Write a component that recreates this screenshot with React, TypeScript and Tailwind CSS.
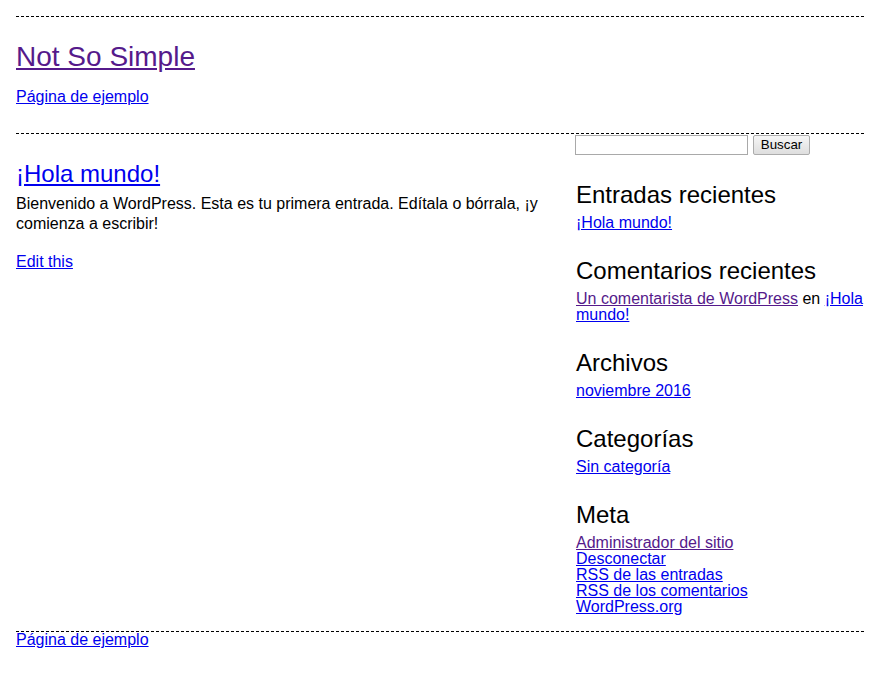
import React from "react";

const linkBlue = "text-[#0000ee] underline";
const linkVisited = "text-[#551a8b] underline";

function Widget({ title, children }: { title: string; children: React.ReactNode }) {
  return (
    <section className="mt-[26px] pl-[1px]">
      <h2 className="text-[24px] leading-[28px] font-normal text-black">{title}</h2>
      <div className="mt-[6px] leading-[16px]">{children}</div>
    </section>
  );
}

export default function App() {
  return (
    <div className="min-h-[676px] bg-white pt-4 pl-4 font-['Liberation_Sans',Arial,sans-serif] text-[16px] text-black">
      <div className="w-[848px]">
        <header className="border-y border-dashed border-black pt-[24px] pb-[27px]">
          <h1 className="text-[28px] leading-[31px] font-normal">
            <a href="#" className={linkVisited}>Not So Simple</a>
          </h1>
          <nav className="mt-[16px] leading-[18px]">
            <a href="#" className={linkBlue}>Página de ejemplo</a>
          </nav>
        </header>

        <div className="flex">
          <main className="flex-1 pt-[26px] pr-[24px]">
            <article>
              <h2 className="text-[24px] leading-[28px] font-normal">
                <a href="#" className={linkBlue}>¡Hola mundo!</a>
              </h2>
              <p className="mt-[6px] leading-[20px]">
                Bienvenido a WordPress. Esta es tu primera entrada. Edítala o bórrala, ¡y comienza a escribir!
              </p>
              <p className="mt-[18px] leading-[20px]">
                <a href="#" className={linkBlue}>Edit this</a>
              </p>
            </article>
          </main>

          <aside className="w-[289px] pt-[1px] pb-[16px]">
            <form className="flex items-start gap-[5px]" onSubmit={(e) => e.preventDefault()}>
              <input
                type="text"
                className="h-[20px] w-[173px] border border-[#a9a9a9] bg-white px-[2px] text-[13px] outline-none"
              />
              <button
                type="submit"
                className="h-[20px] w-[57px] rounded-[2px] border border-[#acacac] bg-gradient-to-b from-[#f6f6f6] to-[#dedede] text-[13.33px] leading-[18px] text-black"
              >
                Buscar
              </button>
            </form>

            <Widget title="Entradas recientes">
              <a href="#" className={linkBlue}>¡Hola mundo!</a>
            </Widget>

            <Widget title="Comentarios recientes">
              <a href="#" className={linkVisited}>Un comentarista de WordPress</a> en{" "}
              <a href="#" className={linkBlue}>¡Hola mundo!</a>
            </Widget>

            <Widget title="Archivos">
              <a href="#" className={linkBlue}>noviembre 2016</a>
            </Widget>

            <Widget title="Categorías">
              <a href="#" className={linkBlue}>Sin categoría</a>
            </Widget>

            <Widget title="Meta">
              <ul className="flex flex-col">
                <li><a href="#" className={linkVisited}>Administrador del sitio</a></li>
                <li><a href="#" className={linkBlue}>Desconectar</a></li>
                <li><a href="#" className={linkBlue}>RSS de las entradas</a></li>
                <li><a href="#" className={linkBlue}>RSS de los comentarios</a></li>
                <li><a href="#" className={linkBlue}>WordPress.org</a></li>
              </ul>
            </Widget>
          </aside>
        </div>

        <footer className="border-t border-dashed border-black leading-[16px]">
          <a href="#" className={linkBlue}>Página de ejemplo</a>
        </footer>
      </div>
    </div>
  );
}
